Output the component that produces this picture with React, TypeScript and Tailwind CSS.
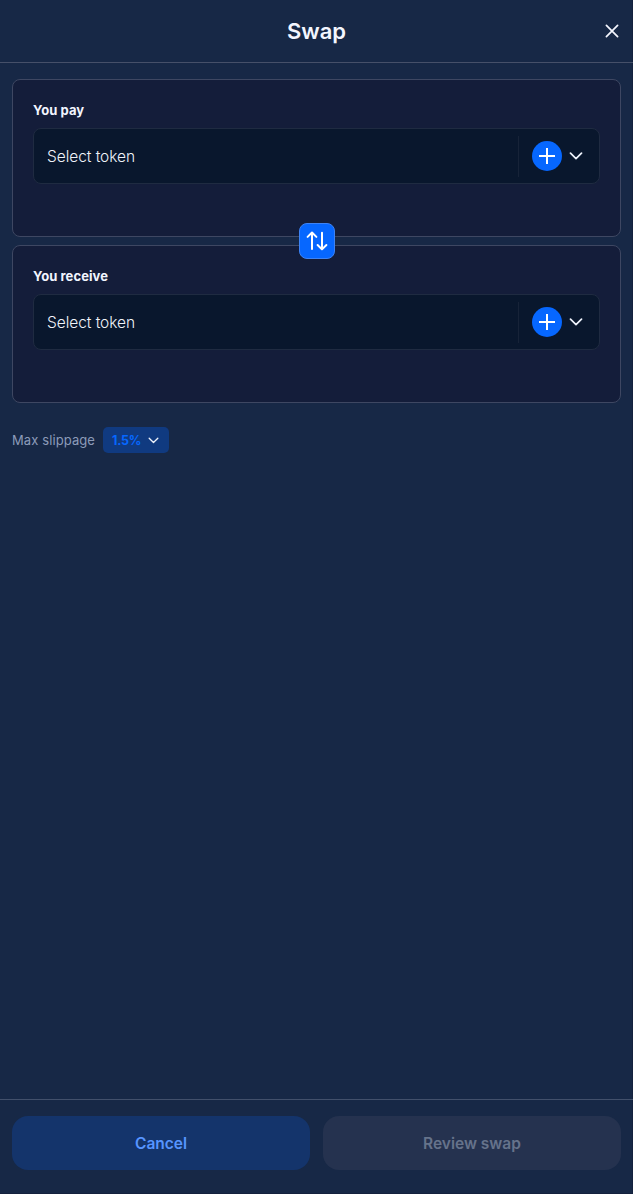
function Chevron({ className }: { className: string }) {
  return (
    <svg viewBox="0 0 14 8" fill="none" stroke="#eef2fb" strokeLinecap="round" strokeLinejoin="round" className={className}>
      <path d="M1.5 1.2 L7 6.6 L12.5 1.2" strokeWidth="1.7" />
    </svg>
  );
}

function TokenCard({ label }: { label: string }) {
  return (
    <section className="h-[158px] rounded-lg border border-[#3e4762] bg-[#141d3a] px-5 pt-5">
      <h2 className="h-[20px] text-[13px] leading-[21px] font-bold tracking-[0.08px] text-[#f2f5ff]">{label}</h2>
      <button className="mt-2 flex h-14 w-full items-center rounded-lg border border-[#1f2b41] bg-[#09172d] pl-[13px] text-left">
        <span className="flex-1 pt-[2px] text-[15.5px] leading-6 font-light tracking-[-0.05px] text-[#f0f3fa]">Select token</span>
        <span className="h-[41px] w-px bg-[#172338]" />
        <span className="ml-[13px] flex size-[30px] items-center justify-center rounded-full bg-[#0667ff]">
          <svg viewBox="0 0 16 16" className="size-4" stroke="#fff" strokeWidth="2">
            <path d="M8 0V16M0 8H16" />
          </svg>
        </span>
        <Chevron className="mr-4 ml-[7px] h-2 w-[14px]" />
      </button>
    </section>
  );
}

export default function App() {
  return (
    <div className="flex h-[1194px] w-full flex-col border-r border-b border-[#14213d] bg-[#172846] font-['Inter',sans-serif]">
      <header className="-mr-px grid h-[63px] shrink-0 grid-cols-[1fr_auto_1fr] items-center border-b border-[#465069] px-3">
        <h1 className="col-start-2 text-[22px] leading-8 font-semibold text-[#f3f6ff]">Swap</h1>
        <button aria-label="Close" className="mr-[2px] justify-self-end">
          <svg viewBox="0 0 14 14" className="size-[14px]" stroke="#f5f7ff" strokeWidth="1.7" strokeLinecap="round">
            <path d="M1.4 1.4L12.6 12.6M12.6 1.4L1.4 12.6" />
          </svg>
        </button>
      </header>

      <main className="-mr-px flex-1 px-3 pt-4">
        <div className="relative flex flex-col gap-2">
          <TokenCard label="You pay" />
          <TokenCard label="You receive" />
          <button
            aria-label="Switch tokens"
            className="absolute top-[144px] left-[286.5px] flex size-9 items-center justify-center rounded-lg border border-[#3d83f5] bg-[#0667ff]"
          >
            <svg viewBox="0 0 22 20" className="h-5 w-[22px] shrink-0" fill="none" stroke="#fff" strokeWidth="2" strokeLinecap="round" strokeLinejoin="round">
              <path d="M6 18V1.6M1.6 5.9L6 1.5L10.4 5.9M16 1.8V18.2M11.6 14L16 18.4L20.4 14" />
            </svg>
          </button>
        </div>
        <div className="mt-6 flex items-center gap-2 text-[13px] leading-5">
          <span className="w-[83px] whitespace-nowrap tracking-[0.1px] text-[#8c9bb9]">Max slippage</span>
          <button className="flex h-[26px] w-[66px] items-center rounded-[5px] bg-[#103a80] pl-[9px] font-bold text-[#0667ff]">
            <span className="w-[28px] pt-[2px] text-[12.5px] tracking-[-0.25px]">1.5%</span>
            <Chevron className="ml-[8px] h-[7px] w-[11px]" />
          </button>
        </div>
      </main>

      <footer className="-mr-px grid h-[94px] shrink-0 grid-cols-2 gap-[13px] border-t border-[#42506b] px-3 pt-4 text-[15.5px] font-semibold">
        <button className="h-[54px] rounded-2xl bg-[#14346b] pt-px text-[#5795ff]">Cancel</button>
        <button className="h-[54px] rounded-2xl bg-[#25324f] pt-px text-[#66738b]" disabled>Review swap</button>
      </footer>
    </div>
  );
}
